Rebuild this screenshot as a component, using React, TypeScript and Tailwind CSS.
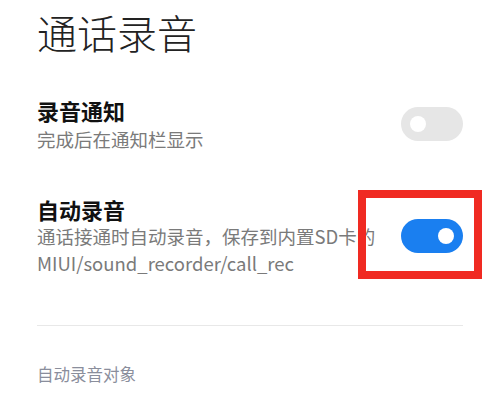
import React from "react"

const font = { fontFamily: '"Noto Sans CJK SC", "Noto Sans", sans-serif' }

function Toggle({ on }: { on: boolean }) {
  return (
    <div
      className={`flex h-[34px] w-[62px] shrink-0 items-center rounded-full px-[9px] ${
        on ? "justify-end bg-[#1a7ff0]" : "justify-start bg-[#e6e6e6]"
      }`}
    >
      <div className="h-[16px] w-[16px] rounded-full bg-white" />
    </div>
  )
}

export default function App() {
  return (
    <div className="relative h-[400px] w-[500px] overflow-hidden bg-white" style={font}>
      <div className="px-[37px]">
        <h1 className="pt-[10px] text-[40px] font-light leading-[44px] text-[#222]">通话录音</h1>

        <div className="mt-[42px] flex items-center justify-between">
          <div>
            <div className="text-[22px] font-bold leading-[28px] text-[#111]">录音通知</div>
            <div className="mt-[2px] text-[18.5px] leading-[26px] text-[#7a7a7a]">完成后在通知栏显示</div>
          </div>
          <Toggle on={false} />
        </div>

        <div className="mt-[43px] flex items-center justify-between">
          <div className="w-[336px]">
            <div className="text-[22px] font-bold leading-[28px] text-[#111]">自动录音</div>
            <div className="whitespace-nowrap text-[18.5px] leading-[27px] text-[#7a7a7a]">
              通话接通时自动录音，保存到内置SD卡的
              <br />
              MIUI/sound_recorder/call_rec
            </div>
          </div>
          <Toggle on={true} />
        </div>

        <div className="mt-[48px] h-px bg-[#e8e8e8]" />

        <div className="mt-[37px] text-[16.5px] leading-[22px] text-[#8a8e9c]">自动录音对象</div>
      </div>

      <div className="absolute left-[358px] top-[190px] h-[89px] w-[124px] border-[8px] border-[#f02a22]" />
    </div>
  )
}
